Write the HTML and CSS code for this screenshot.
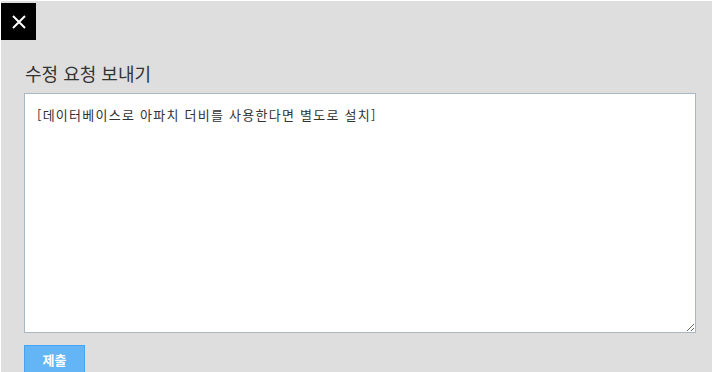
FILE: index.html
```html
<!DOCTYPE html>
<html lang="ko">
<head>
<meta charset="utf-8">
<link rel="stylesheet" href="styles.css">
</head>
<body>
<div class="dialog">
  <button class="close" aria-label="닫기">
    <svg width="16" height="16" viewBox="0 0 16 16"><path d="M2 2L14 14M14 2L2 14" stroke="#fff" stroke-width="2" fill="none"/></svg>
  </button>
  <h2 class="title">수정 요청 보내기</h2>
  <textarea class="box">[데이터베이스로 아파치 더비를 사용한다면 별도로 설치]</textarea>
  <button class="submit">제출</button>
</div>
</body>
</html>
```
FILE: styles.css
```css
html, body { margin: 0; padding: 0; background: #fff; height: 100%; overflow: hidden; }
.dialog {
  margin: 1px 0 0 1px;
  background: #dedede;
  height: calc(100% - 1px);
  box-sizing: border-box;
  padding-top: 2px;
  font-family: "Noto Sans CJK KR", "Noto Sans", sans-serif;
  display: flex;
  flex-direction: column;
  align-items: flex-start;
  overflow: hidden;
}
.close {
  flex: none;
  width: 35px; height: 37px;
  background: #000; border: 0; padding: 0; margin: 0;
  display: flex; align-items: center; justify-content: center;
}
.title {
  flex: none;
  margin: 20px 0 0 24px;
  font-size: 18px;
  line-height: 26px;
  font-weight: 400;
  color: #333;
}
.box {
  flex: none;
  margin: 7px 0 0 23px;
  width: 672px; height: 240px;
  box-sizing: border-box;
  border: 1px solid #a9b8c2;
  background: #fff;
  padding: 11px 12px;
  font-family: "Noto Sans CJK KR", "Noto Sans", sans-serif;
  font-size: 13px;
  line-height: 20px;
  letter-spacing: 1.25px;
  color: #333;
  resize: both;
}
.submit {
  flex: none;
  margin: 12px 0 0 23px;
  width: 61px; height: 28px;
  background: #64b5f6;
  border: 1px solid #42a5f5;
  color: #fff;
  font-family: "Noto Sans CJK KR", sans-serif;
  font-weight: 700;
  font-size: 13px;
  padding: 0;
}
```
